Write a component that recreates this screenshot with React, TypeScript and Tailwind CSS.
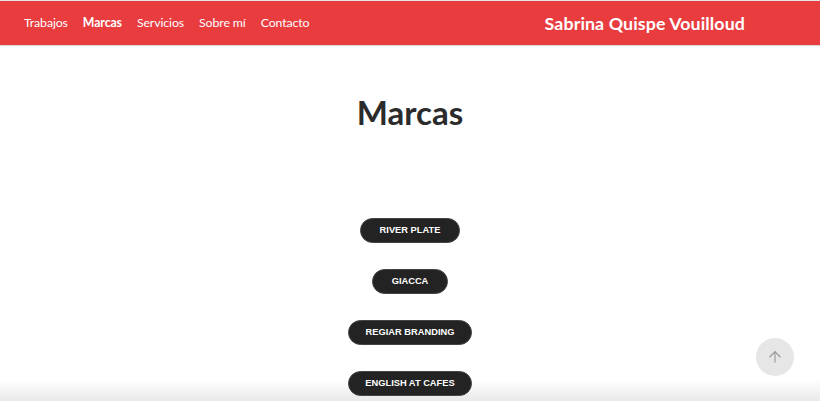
import { ArrowUp } from "lucide-react";

const brands = ["RIVER PLATE", "GIACCA", "REGIAR BRANDING", "ENGLISH AT CAFES"];

const nav = [
  { label: "Trabajos", active: false },
  { label: "Marcas", active: true },
  { label: "Servicios", active: false },
  { label: "Sobre mí", active: false },
  { label: "Contacto", active: false },
];

export default function App() {
  return (
    <div
      className="relative min-h-[401px] h-[401px] overflow-hidden bg-[linear-gradient(to_bottom,#ffffff_0,#ffffff_380px,#e9e9e9_401px)]"
      style={{ fontFamily: "Lato, 'Open Sans', sans-serif" }}
    >
      {/* Header */}
      <header className="h-[46px] bg-[#e93c3f] border-t border-[#e4e4e4] border-b border-b-[#d8d8d8] flex items-center justify-between pl-6 pr-[75px]">
        <nav className="flex items-center gap-[15px] text-[12.3px] text-white tracking-[-0.1px]">
          {nav.map((item) => (
            <a
              key={item.label}
              href="#"
              className={item.active ? "font-bold" : "font-normal"}
            >
              {item.label}
            </a>
          ))}
        </nav>
        <a href="#" className="text-white font-bold text-[17.8px] tracking-[0.1px]">
          Sabrina Quispe Vouilloud
        </a>
      </header>

      {/* Content */}
      <main className="flex flex-col items-center">
        <h1 className="mt-[46px] text-[33px] leading-[40px] font-bold text-[#2b2b2b]">
          Marcas
        </h1>
        <div className="mt-[86px] flex flex-col items-center gap-[26px]">
          {brands.map((b) => (
            <a
              key={b}
              href="#"
              className={`h-[25px] flex items-center justify-center rounded-full bg-[#232323] border border-[#444] text-white text-[9.3px] font-bold ${
                b === "REGIAR BRANDING" || b === "ENGLISH AT CAFES" ? "w-[124px]" : "px-[19px]"
              }`}
              style={{ fontFamily: "'Liberation Sans', Arial, sans-serif" }}
            >
              {b}
            </a>
          ))}
        </div>
      </main>

      {/* Scroll to top */}
      <button className="absolute left-[756px] top-[338px] w-[38px] h-[38px] rounded-full bg-[#e6e6e6] flex items-center justify-center">
        <ArrowUp className="w-[18px] h-[18px] text-[#9a9a9a]" strokeWidth={1.5} />
      </button>
    </div>
  );
}
